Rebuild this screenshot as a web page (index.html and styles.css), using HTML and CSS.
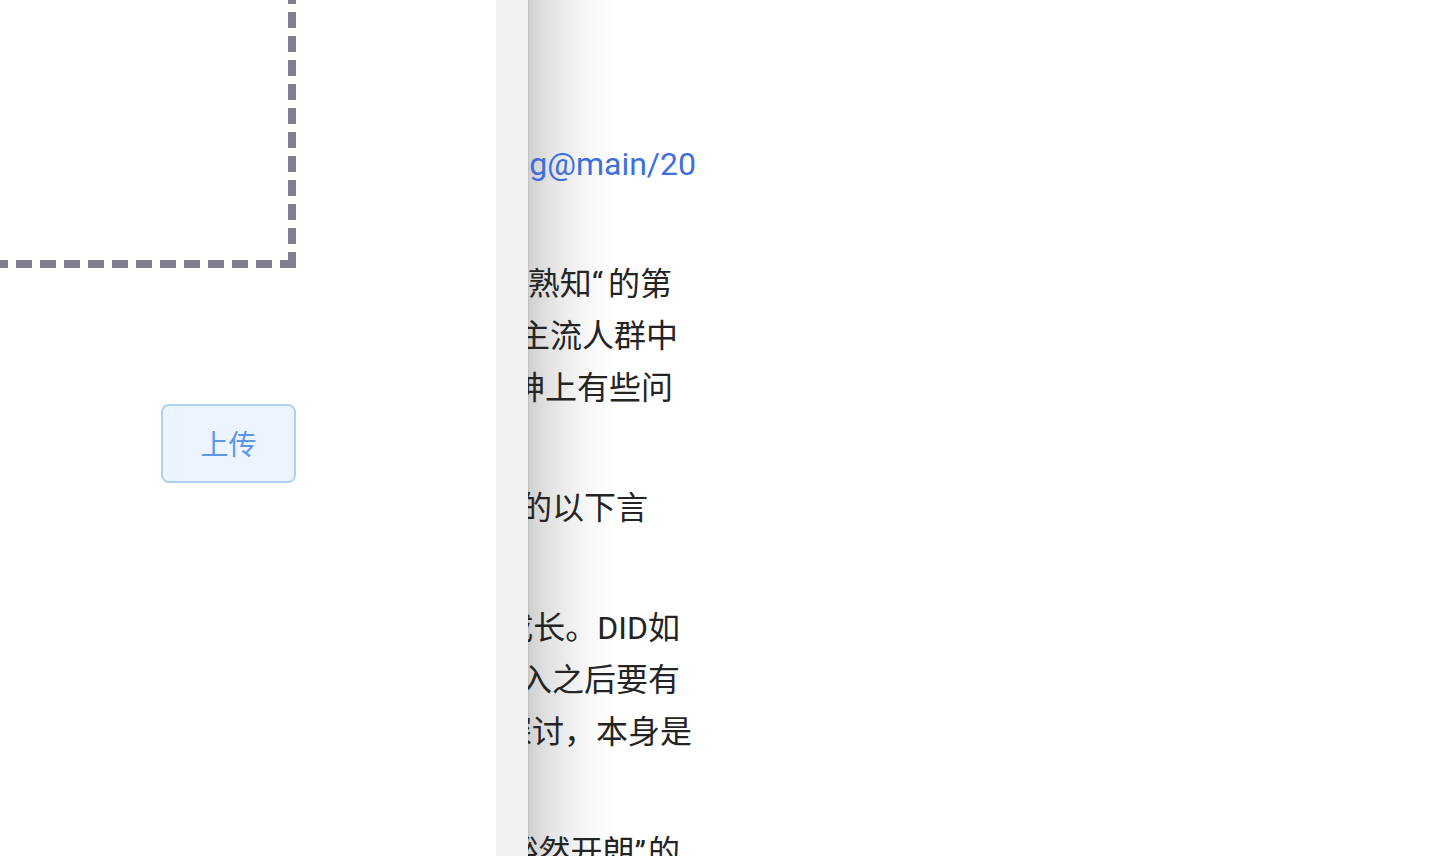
FILE: index.html
```html
<!DOCTYPE html>
<html lang="zh-CN">
<head>
<meta charset="utf-8">
<title>上传</title>
<link rel="stylesheet" href="styles.css">
</head>
<body>
<div class="layout">
  <section class="left">
    <div class="uploader">
      <div class="drop"></div>
      <div class="actions">
        <button class="btn-upload" type="button">上传</button>
      </div>
    </div>
  </section>
  <div class="splitter"></div>
  <section class="viewer">
    <div class="doc">
      <p class="para">
        <span class="ln link">img@main/20</span>
      </p>
      <p class="para">
        <span class="ln e20">熟知<span class="q">“</span>的第</span>
        <span class="ln e14">主流人群中</span>
        <span class="ln e19">神上有些问</span>
      </p>
      <p class="para">
        <span class="ln e44">的以下言</span>
      </p>
      <p class="para">
        <span class="ln e12">成长。DID如</span>
        <span class="ln e12">入之后要有</span>
        <span class="ln e0">探讨，本身是</span>
      </p>
      <p class="para">
        <span class="ln e12">豁然开朗<span class="q2">”</span>的</span>
      </p>
    </div>
  </section>
</div>
</body>
</html>
```
FILE: styles.css
```css
html, body {
  margin: 0;
  padding: 0;
  height: 100%;
  overflow: hidden;
  background: #ffffff;
}

.layout {
  display: flex;
  height: 856px;
  width: 1430px;
}

.left {
  width: 496px;
  flex: none;
  background: #ffffff;
  overflow: hidden;
}

.uploader {
  width: 320px;
  margin: -32px 0 0 -24px;
  display: flex;
  flex-direction: column;
}

.drop {
  width: 320px;
  height: 300px;
  background:
    repeating-linear-gradient(to top, #817f8e 0 16px, transparent 16px 24px) right bottom / 8px 100% no-repeat,
    repeating-linear-gradient(to left, #817f8e 0 16px, transparent 16px 24px) right bottom / 100% 8px no-repeat,
    repeating-linear-gradient(to bottom, #817f8e 0 16px, transparent 16px 24px) left top / 8px 100% no-repeat,
    repeating-linear-gradient(to right, #817f8e 0 16px, transparent 16px 24px) left top / 100% 8px no-repeat;
}

.actions {
  display: flex;
  justify-content: flex-end;
  margin-top: 136px;
}

.btn-upload {
  width: 135px;
  height: 79px;
  box-sizing: border-box;
  border: 2px solid #b0d0f8;
  border-radius: 8px;
  background: #ecf4ff;
  color: #5a99e8;
  font-family: "Noto Sans CJK SC", "Noto Sans", sans-serif;
  font-size: 28px;
  line-height: 1;
  padding: 0 0 2px 0;
  cursor: pointer;
}

.splitter {
  width: 32px;
  flex: none;
  background: #f2f2f2;
}

.viewer {
  flex: 1;
  overflow: hidden;
  background: linear-gradient(to right, #bdbdbd 0, #c8c8c8 1px, #d2d2d2 2px, #e2e2e2 20px, #f1f1f1 45px, #fbfbfb 68px, #ffffff 86px);
}

.doc {
  width: 400px;
  margin-left: -236px;
  padding-top: 138px;
  font-family: Roboto, "Noto Sans CJK SC", sans-serif;
  font-size: 32px;
  line-height: 52px;
  color: #242424;
}

.para {
  margin: 0 0 68px 0;
}

.ln {
  display: block;
  white-space: nowrap;
  text-align: right;
}

.q {
  padding-right: 5px;
}

.q2 {
  padding-right: 2px;
}

.link {
  color: #3e6fdc;
  margin-right: -4px;
}

.e0 { padding-right: 0; }
.e12 { padding-right: 12px; }
.e14 { padding-right: 14px; }
.e19 { padding-right: 19px; }
.e20 { padding-right: 20px; }
.e44 { padding-right: 44px; }
```
